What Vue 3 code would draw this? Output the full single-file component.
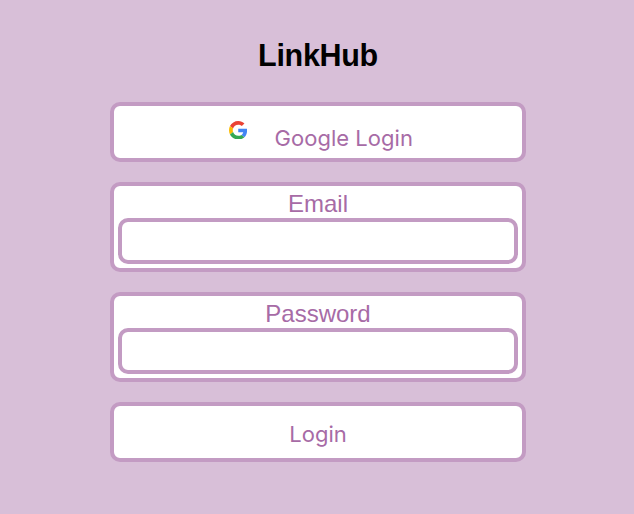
<script setup>
import { ref } from 'vue'

const email = ref('')
const password = ref('')
</script>

<template>
  <main class="page">
    <h1 class="title">LinkHub</h1>
    <form class="form" @submit.prevent>
      <button class="button" type="button">
        <svg class="logo" viewBox="0 0 48 48" aria-hidden="true">
          <path fill="#EA4335" d="M24 9.5c3.54 0 6.71 1.22 9.21 3.6l6.85-6.85C35.9 2.38 30.47 0 24 0 14.62 0 6.51 5.38 2.56 13.22l7.98 6.19C12.43 13.72 17.74 9.5 24 9.5z" />
          <path fill="#4285F4" d="M46.98 24.55c0-1.57-.15-3.09-.38-4.55H24v9.02h12.94c-.58 2.96-2.26 5.48-4.78 7.18l7.73 6c4.51-4.18 7.09-10.36 7.09-17.65z" />
          <path fill="#FBBC05" d="M10.53 28.59c-.48-1.45-.76-2.99-.76-4.59s.27-3.14.76-4.59l-7.98-6.19C.92 16.46 0 20.12 0 24c0 3.88.92 7.54 2.56 10.78l7.97-6.19z" />
          <path fill="#34A853" d="M24 48c6.48 0 11.93-2.13 15.89-5.81l-7.73-6c-2.15 1.45-4.92 2.3-8.16 2.3-6.26 0-11.57-4.22-13.47-9.91l-7.98 6.19C6.51 42.62 14.62 48 24 48z" />
        </svg>
        <span class="google-label">Google Login</span>
      </button>
      <label class="field">
        <span class="field-label">Email</span>
        <input v-model="email" class="input" type="email" />
      </label>
      <label class="field">
        <span class="field-label">Password</span>
        <input v-model="password" class="input" type="password" />
      </label>
      <button class="button" type="submit"><span class="login-label">Login</span></button>
    </form>
  </main>
</template>

<style>
body {
  background: #d8bfd8;
}
</style>

<style scoped>
.page {
  box-sizing: border-box;
  min-height: 514px;
  padding: 36px 108px 0 110px;
  background: #d8bfd8;
  font-family: "Liberation Sans", Arial, sans-serif;
}
.title {
  margin: 0 0 26px;
  height: 40px;
  color: #000;
  font-size: 30.5px;
  line-height: 38px;
  letter-spacing: -0.3px;
  text-align: center;
}
.form {
  display: flex;
  flex-direction: column;
  gap: 20px;
}
.button,
.field,
.input {
  box-sizing: border-box;
  border: 4px solid #c39bc3;
  border-radius: 10px;
  background: #fff;
  color: #a76ba6;
}
.button {
  display: flex;
  justify-content: center;
  width: 100%;
  height: 60px;
  padding: 0;
  font: 22px/30px Inter, sans-serif;
  letter-spacing: 0.03px;
}
.logo {
  width: 18.5px;
  height: 18.5px;
  margin: 14.5px 27.5px 0 5.5px;
}
.google-label {
  margin-top: 17px;
}
.login-label {
  margin-top: 13px;
}
.field {
  display: flex;
  flex-direction: column;
  height: 90px;
  padding: 4px;
}
.field-label {
  height: 28px;
  font-size: 24px;
  line-height: 28px;
  text-align: center;
}
.input {
  width: 100%;
  height: 46px;
  padding: 0 10px;
  font: 24px "Liberation Sans", Arial, sans-serif;
  outline: none;
}
</style>
